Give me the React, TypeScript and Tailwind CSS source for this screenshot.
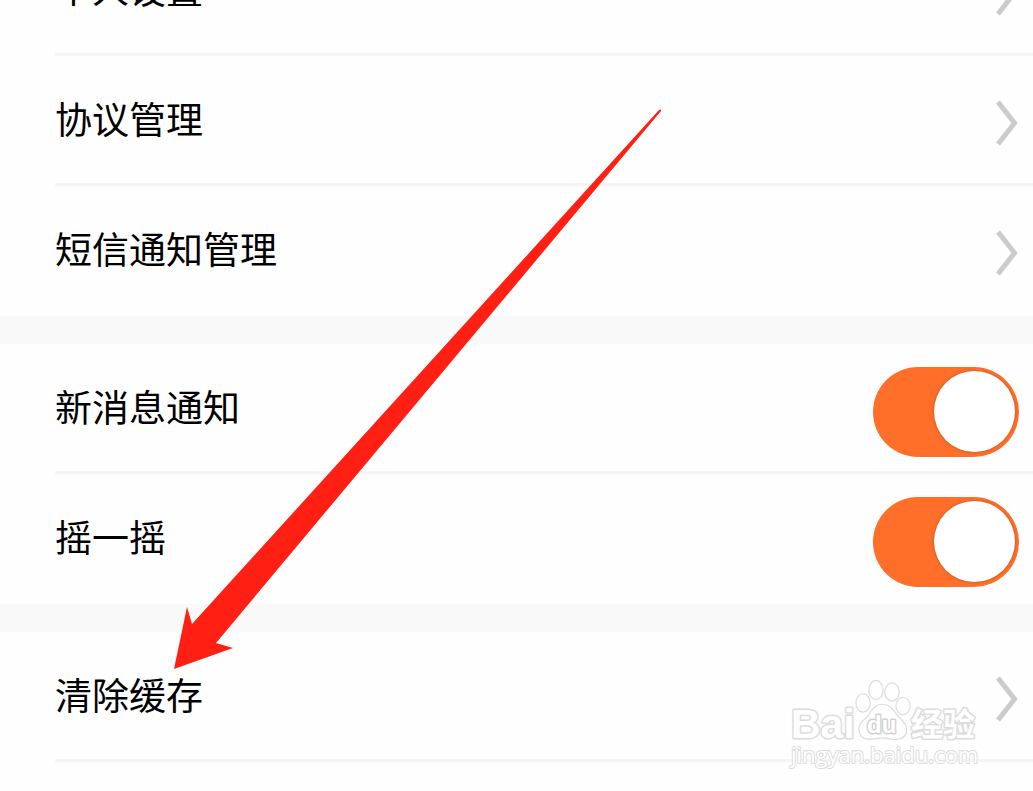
import { useState } from 'react'

const groups = [
  [
    { name: '个人设置', type: 'link' },
    { name: '协议管理', type: 'link' },
    { name: '短信通知管理', type: 'link' },
  ],
  [
    { name: '新消息通知', type: 'switch' },
    { name: '摇一摇', type: 'switch' },
  ],
  [{ name: '清除缓存', type: 'link' }],
]

function Chevron() {
  return (
    <svg width="22" height="46" viewBox="0 0 22 46" fill="none" className="mt-1.5 shrink-0" aria-hidden="true">
      <path d="M2 2 L18.500 23 L2 44" stroke="#cbcbcb" strokeWidth="5" />
    </svg>
  )
}

function LinkRow({ name, last }: { name: string; last: boolean }) {
  return (
    <a href="#" className={`flex h-[130px] items-center justify-between border-b-3 pr-[15px] ${last ? 'border-transparent' : 'border-[#f5f5f5]'}`}>
      <span className="pb-0.5">{name}</span>
      <Chevron />
    </a>
  )
}

function SwitchRow({ name, last }: { name: string; last: boolean }) {
  const [on, setOn] = useState(true)
  return (
    <label className={`flex h-[130px] items-center justify-between border-b-3 pr-3.5 ${last ? 'border-transparent' : 'border-[#f5f5f5]'}`}>
      <span className="pb-0.5">{name}</span>
      <input
        type="checkbox"
        role="switch"
        checked={on}
        onChange={e => setOn(e.target.checked)}
        className="mt-2 flex h-[90px] w-[146px] shrink-0 appearance-none items-center rounded-full bg-gray-300 px-1 before:size-[81px] before:rounded-full before:bg-white before:shadow-[0_0_3px_#a85024] checked:justify-end checked:bg-[#ff6f29]"
      />
    </label>
  )
}

function Arrow() {
  return (
    <svg width="500" height="570" viewBox="0 0 500 570" className="pointer-events-none absolute left-[170px] top-[105px]" aria-hidden="true">
      <path d="M489 5 L491 4.500 L491 6 L46 538 L63 543 L4 564 L17 502 L22 519 Z" fill="#ff2013" />
    </svg>
  )
}

function Watermark() {
  return (
    <svg width="200" height="100" viewBox="0 0 200 100" className="pointer-events-none absolute left-[785px] top-[675px]" aria-hidden="true">
      <g fill="#fff" stroke="#dcdcdc" strokeWidth="3" strokeLinejoin="round" paintOrder="stroke" fontFamily='"Liberation Sans", "Noto Sans CJK SC", sans-serif'>
        <text x="6" y="63" fontSize="41" fontWeight="700">Bai</text>
        <text x="126" y="61" fontSize="32" fontWeight="700">经验</text>
        <text x="6" y="88" fontSize="22" strokeWidth="2" fontFamily='"Open Sans", sans-serif'>jingyan.baidu.com</text>
        <g strokeWidth="2.500">
          <ellipse cx="78" cy="28" rx="6.500" ry="8.500" />
          <ellipse cx="91" cy="15" rx="6.500" ry="9" />
          <ellipse cx="107" cy="17" rx="6.500" ry="8.500" />
          <ellipse cx="118" cy="31" rx="6.500" ry="8" />
          <path d="M97 30 C88 30 87 38 82 43 C77 47 73 51 75 57 C77 65 86 64 91 63 C96 62 100 62 104 63 C111 65 119 64 121 57 C122 51 118 47 114 43 C109 38 107 30 97 30 Z" />
        </g>
        <text x="82" y="58" fontSize="24" fontWeight="700" strokeWidth="3" stroke="#d2d2d2">du</text>
      </g>
    </svg>
  )
}

export default function App() {
  return (
    <div className="relative min-h-screen overflow-hidden bg-[#fefefe]">
      <main className='-mt-[74px] font-["Noto_Sans_CJK_SC",sans-serif] text-[37px] leading-none text-black'>
        {groups.map((items, i) => (
          <div key={i}>
            {i > 0 && <div className="h-7 bg-[#f9f9f9]"></div>}
            <section className="pl-[55px]">
              {items.map((item, n) => {
                const last = i < groups.length - 1 && n === items.length - 1
                return item.type === 'link'
                  ? <LinkRow key={item.name} name={item.name} last={last} />
                  : <SwitchRow key={item.name} name={item.name} last={last} />
              })}
            </section>
          </div>
        ))}
      </main>
      <Arrow />
      <Watermark />
    </div>
  )
}
